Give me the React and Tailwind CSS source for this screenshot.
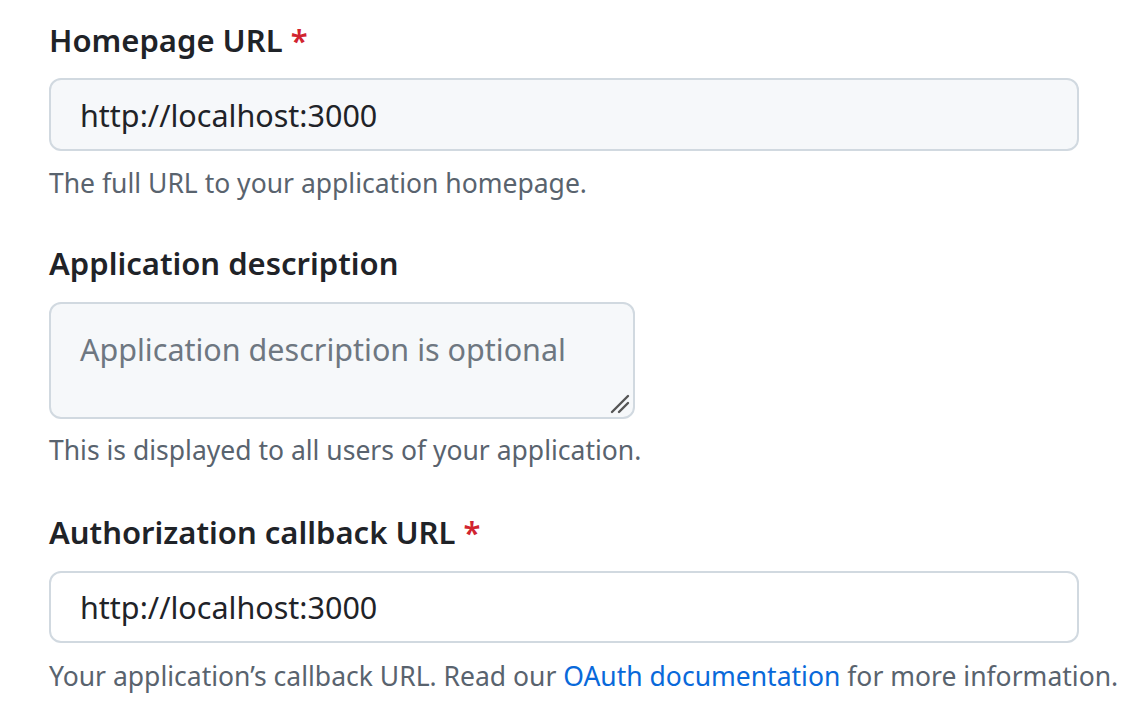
export default function App() {
  const font = { fontFamily: '"Noto Sans", "Open Sans", sans-serif' };
  return (
    <div className="w-[1147px] h-[712px] bg-white overflow-hidden" style={font}>
      <div className="pl-[49px] pt-[21px] w-[1079px]">
        <label className="block h-[42px] leading-[38px] text-[31px] font-semibold text-[#1f2328]">
          Homepage URL <span className="text-[#d1242f]">*</span>
        </label>
        <input
          readOnly
          value="http://localhost:3000"
          className="mt-[15px] block w-[1030px] h-[73px] rounded-[12px] border-2 border-[#d1d9e0] bg-[#f6f8fa] pl-[29px] text-[30.5px] text-[#1f2328] outline-none"
          style={font}
        />
        <p className="mt-[15px] h-[36px] leading-[34px] text-[26.5px] text-[#59636e]">
          The full URL to your application homepage.
        </p>

        <label className="mt-[42px] block h-[42px] leading-[38px] text-[31px] font-semibold text-[#1f2328]">
          Application description
        </label>
        <div className="relative mt-[16px] w-[586px] h-[117px]">
          <textarea
            readOnly
            placeholder="Application description is optional"
            className="block w-full h-full resize-none rounded-[12px] border-2 border-[#d1d9e0] bg-[#f6f8fa] pl-[29px] pt-[23px] text-[30.5px] leading-[44px] text-[#1f2328] placeholder:text-[#6e7781] outline-none"
            style={font}
          />
          <svg className="absolute right-[4px] bottom-[4px]" width="22" height="22" viewBox="0 0 22 22">
            <line x1="3" y1="19" x2="19" y2="3" stroke="#555" strokeWidth="2.4" strokeLinecap="round" />
            <line x1="10" y1="19" x2="19" y2="10" stroke="#555" strokeWidth="2.4" strokeLinecap="round" />
          </svg>
        </div>
        <p className="mt-[14px] h-[36px] leading-[34px] text-[26.5px] text-[#59636e]">
          This is displayed to all users of your application.
        </p>

        <label className="mt-[44px] block h-[42px] leading-[38px] text-[31px] font-semibold text-[#1f2328]">
          Authorization callback URL <span className="text-[#d1242f]">*</span>
        </label>
        <input
          readOnly
          value="http://localhost:3000"
          className="mt-[16px] block w-[1030px] h-[72px] rounded-[12px] border-2 border-[#d1d9e0] bg-white pl-[29px] text-[30.5px] text-[#1f2328] outline-none"
          style={font}
        />
        <p className="mt-[16px] h-[36px] leading-[34px] text-[26.5px] text-[#59636e] whitespace-nowrap">
          Your application’s callback URL. Read our{" "}
          <a className="text-[#0969da]">OAuth documentation</a> for more information.
        </p>
      </div>
    </div>
  );
}
